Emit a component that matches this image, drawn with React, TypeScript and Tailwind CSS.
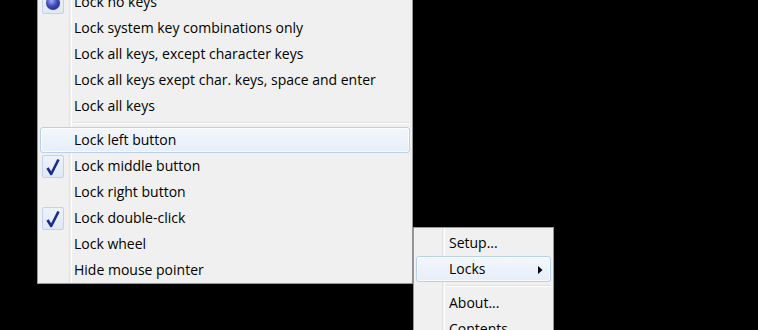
import { FC, Fragment } from "react"

type Item =
  | { type: "sep" }
  | { type: "item"; label: string; mark?: "check" | "radio"; hover?: boolean; sub?: boolean }

const mainItems: Item[] = [
  { type: "item", label: "Lock no keys", mark: "radio" },
  { type: "item", label: "Lock system key combinations only" },
  { type: "item", label: "Lock all keys, except character keys" },
  { type: "item", label: "Lock all keys exept char. keys, space and enter" },
  { type: "item", label: "Lock all keys" },
  { type: "sep" },
  { type: "item", label: "Lock left button", hover: true },
  { type: "item", label: "Lock middle button", mark: "check" },
  { type: "item", label: "Lock right button" },
  { type: "item", label: "Lock double-click", mark: "check" },
  { type: "item", label: "Lock wheel" },
  { type: "item", label: "Hide mouse pointer" }
]

const trayItems: Item[] = [
  { type: "item", label: "Setup..." },
  { type: "item", label: "Locks", hover: true, sub: true },
  { type: "sep" },
  { type: "item", label: "About..." },
  { type: "item", label: "Contents" }
]

const Mark: FC<{ mark?: "check" | "radio" }> = ({ mark }) => {
  if (!mark) return <Fragment />
  return (
    <div className="absolute left-[1px] top-[1px] w-[22px] h-[23px] rounded-[2px] border border-[#c2d2e8] bg-gradient-to-b from-[#eef3fa] to-[#dfe8f5] flex items-center justify-center">
      {mark === "check" ? (
        <svg width="14" height="18" viewBox="0 0 14 18">
          <path d="M1.5 10 L5.2 16 L12.5 1.5" fill="none" stroke="#1a2a8c" strokeWidth="2.6" strokeLinejoin="round" />
        </svg>
      ) : (
        <div className="w-[14px] h-[14px] rounded-full bg-[radial-gradient(circle_at_40%_35%,#a3adf5_0%,#3d47b8_45%,#1b2170_100%)]" />
      )}
    </div>
  )
}

const Menu: FC<{ items: Item[]; gutter: number; textLeft: number; className: string }> = ({ items, gutter, textLeft, className }) => {
  return (
    <div className={`absolute border border-[#979797] bg-[#f0f0f0] px-[2px] pt-[2px] pb-0 shadow-[2px_2px_3px_rgba(0,0,0,0.5)] ${className}`}>
      <div className="absolute top-0 bottom-0 w-[2px] border-l border-[#e2e3e3] shadow-[1px_0_0_#ffffff]" style={{ left: gutter }} />
      {items.map((item, i) =>
        item.type === "sep" ? (
          <div key={i} className="relative h-[8px]" style={{ marginLeft: gutter }}>
            <div className="absolute left-[2px] right-0 top-[3px] h-px bg-[#e0e0e0]" />
            <div className="absolute left-[2px] right-0 top-[4px] h-px bg-white" />
          </div>
        ) : (
          <div
            key={i}
            className={`relative h-[26px] flex items-center rounded-[3px] ${
              item.hover
                ? "border border-[#b9d0ec] bg-gradient-to-b from-[#f3f7fc] to-[#e6eef9] shadow-[inset_0_0_0_1px_rgba(255,255,255,0.7)]"
                : "border border-transparent"
            }`}
          >
            <Mark mark={item.mark} />
            <span className="text-[14px] text-[#000] leading-none whitespace-nowrap" style={{ paddingLeft: textLeft - 1 }}>
              {item.label}
            </span>
            {item.sub && (
              <svg className="absolute right-[7px] top-[9px]" width="5" height="8" viewBox="0 0 5 8">
                <path d="M0 0 L4.5 4 L0 8 Z" fill="#000" />
              </svg>
            )}
          </div>
        )
      )}
    </div>
  )
}

export default function App() {
  return (
    <div className="relative w-[758px] h-[330px] bg-black overflow-hidden font-['Open_Sans',sans-serif]">
      <Menu items={mainItems} gutter={31} textLeft={34} className="left-[37px] top-[-14px] w-[376px]" />
      <Menu items={trayItems} gutter={28} textLeft={33} className="left-[413px] top-[227px] w-[141px]" />
    </div>
  )
}
